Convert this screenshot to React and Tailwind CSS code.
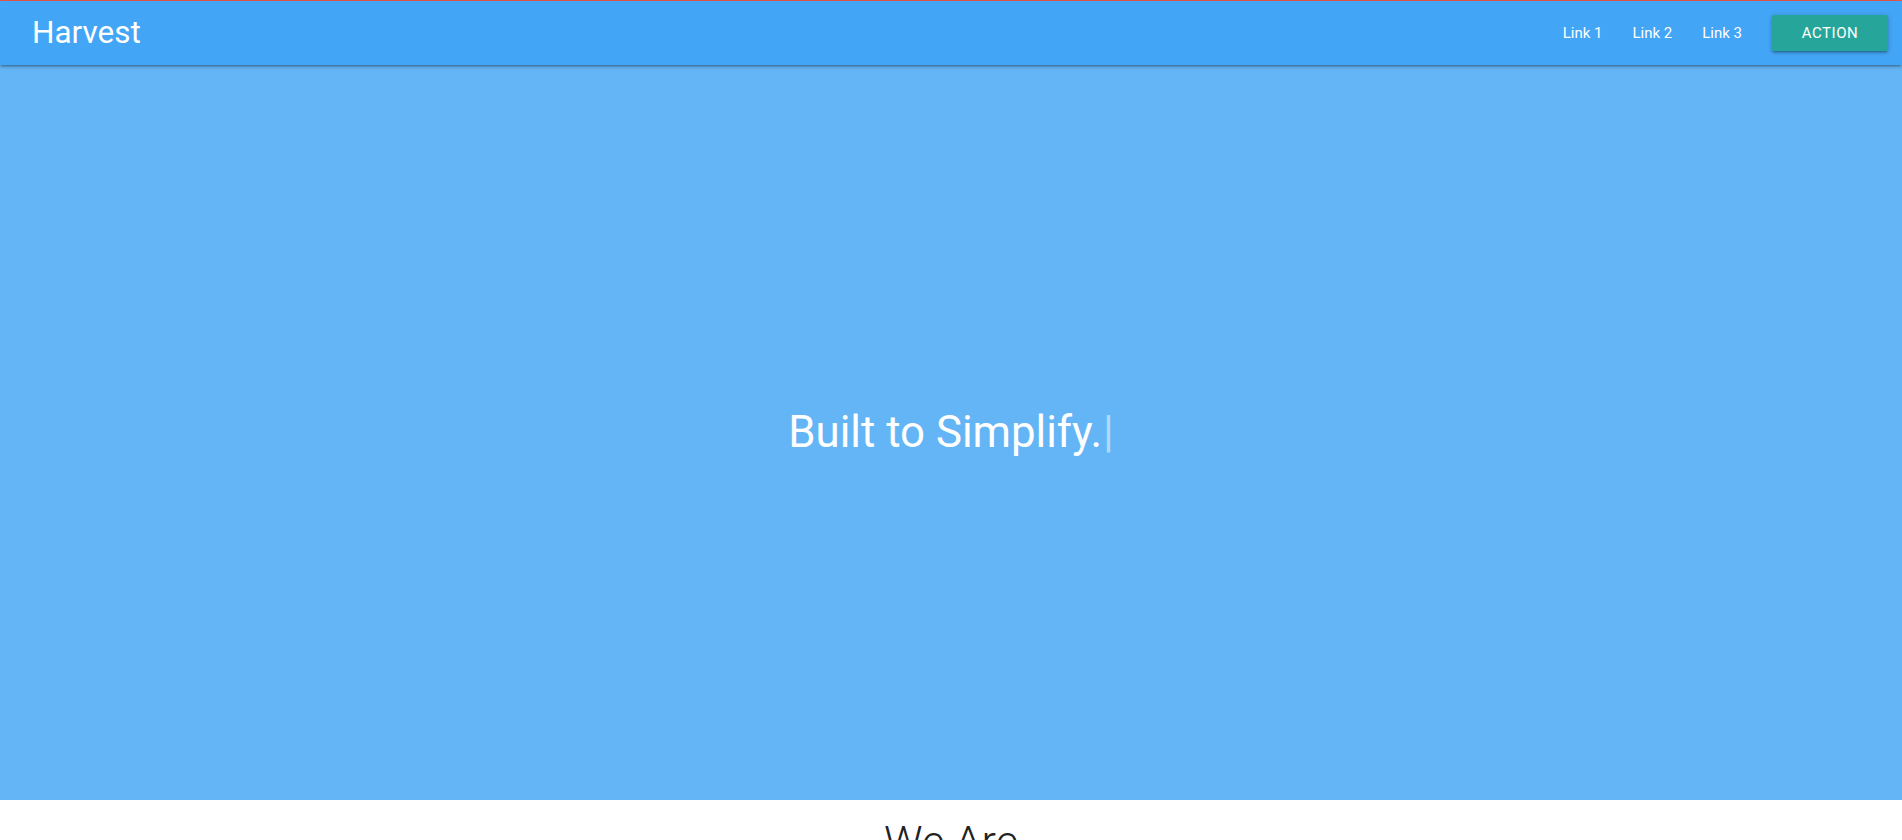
export default function App() {
  return (
    <div className="min-h-screen bg-white" style={{ fontFamily: "Roboto, 'Liberation Sans', sans-serif" }}>
      <div className="h-px bg-[#f0574e]" />
      <nav className="relative z-10 flex h-16 items-center justify-between bg-[#42a5f5] pl-8 pr-[14px] text-white shadow-[0_2px_2px_0_rgba(0,0,0,0.14),0_3px_1px_-2px_rgba(0,0,0,0.12),0_1px_5px_0_rgba(0,0,0,0.2)]">
        <a className="text-[31.5px] leading-none font-normal">Harvest</a>
        <div className="flex items-center">
          <a className="px-[15px] text-[15px]">Link 1</a>
          <a className="px-[15px] text-[15px]">Link 2</a>
          <a className="px-[15px] text-[15px]">Link 3</a>
          <button className="ml-[15px] h-9 w-[116px] rounded-[2px] bg-[#26a69a] text-[15px] font-normal tracking-[0.5px] text-white shadow-[0_2px_2px_0_rgba(0,0,0,0.14),0_3px_1px_-2px_rgba(0,0,0,0.12),0_1px_5px_0_rgba(0,0,0,0.2)]">
            ACTION
          </button>
        </div>
      </nav>
      <section className="flex h-[735px] items-center justify-center bg-[#64b5f6]">
        <h1 className="text-[43.8px] font-normal text-white leading-none">
          Built to Simplify.<span className="ml-px font-normal text-white/50">|</span>
        </h1>
      </section>
      <section className="flex justify-center pt-[20px]">
        <h2 className="text-[43px] font-light leading-none text-[#222]">We Are</h2>
      </section>
    </div>
  );
}
